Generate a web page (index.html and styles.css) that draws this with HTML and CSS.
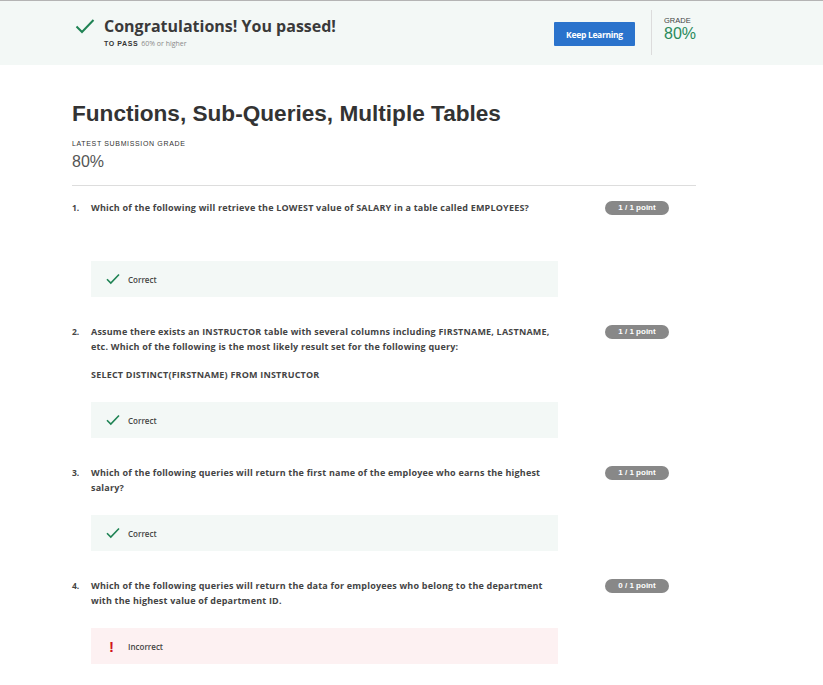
FILE: index.html
```html
<!DOCTYPE html>
<html lang="en">
<head>
<meta charset="utf-8">
<title>Functions, Sub-Queries, Multiple Tables</title>
<link rel="stylesheet" href="styles.css">
</head>
<body>
<header class="banner">
  <div class="banner-inner">
    <svg class="banner-check" width="20" height="16" viewBox="0 0 20 16"><path d="M1.5 8.5 L7 14 L18.5 2" fill="none" stroke="#1f8354" stroke-width="2"/></svg>
    <div class="banner-text">
      <h2 class="banner-title">Congratulations! You passed!</h2>
      <div class="banner-sub"><span class="to-pass">TO PASS</span> <span class="pass-req">60% or higher</span></div>
    </div>
    <button class="keep-btn">Keep Learning</button>
    <div class="banner-divider"></div>
    <div class="banner-grade">
      <div class="grade-label">GRADE</div>
      <div class="grade-value">80%</div>
    </div>
  </div>
</header>

<main class="content">
  <h1 class="page-title">Functions, Sub-Queries, Multiple Tables</h1>
  <div class="sub-label">LATEST SUBMISSION GRADE</div>
  <div class="sub-grade">80%</div>
  <hr class="rule">

  <section class="question">
    <div class="q-row">
      <span class="q-num">1.</span>
      <div class="q-text">
        <p>Which of the following will retrieve the LOWEST value of SALARY in a table called EMPLOYEES?</p>
        <div class="q-blank"></div>
      </div>
      <span class="badge">1 / 1 point</span>
    </div>
    <div class="result correct">
      <svg class="res-icon" width="14" height="12" viewBox="0 0 14 12"><path d="M1 6.2 L4.8 10 L13 1.5" fill="none" stroke="#1f8354" stroke-width="1.6"/></svg>
      <span>Correct</span>
    </div>
  </section>

  <section class="question">
    <div class="q-row">
      <span class="q-num">2.</span>
      <div class="q-text">
        <p>Assume there exists an INSTRUCTOR table with several columns including FIRSTNAME, LASTNAME, etc. Which of the following is the most likely result set for the following query:</p>
        <p class="q-code">SELECT DISTINCT(FIRSTNAME) FROM INSTRUCTOR</p>
      </div>
      <span class="badge">1 / 1 point</span>
    </div>
    <div class="result correct">
      <svg class="res-icon" width="14" height="12" viewBox="0 0 14 12"><path d="M1 6.2 L4.8 10 L13 1.5" fill="none" stroke="#1f8354" stroke-width="1.6"/></svg>
      <span>Correct</span>
    </div>
  </section>

  <section class="question">
    <div class="q-row">
      <span class="q-num">3.</span>
      <div class="q-text">
        <p>Which of the following queries will return the first name of the employee who earns the highest salary?</p>
      </div>
      <span class="badge">1 / 1 point</span>
    </div>
    <div class="result correct">
      <svg class="res-icon" width="14" height="12" viewBox="0 0 14 12"><path d="M1 6.2 L4.8 10 L13 1.5" fill="none" stroke="#1f8354" stroke-width="1.6"/></svg>
      <span>Correct</span>
    </div>
  </section>

  <section class="question">
    <div class="q-row">
      <span class="q-num">4.</span>
      <div class="q-text">
        <p>Which of the following queries will return the data for employees who belong to the department with the highest value of department ID.</p>
      </div>
      <span class="badge">0 / 1 point</span>
    </div>
    <div class="result incorrect">
      <span class="res-bang">!</span>
      <span>Incorrect</span>
    </div>
  </section>
</main>
</body>
</html>
```

FILE: styles.css
```css
html, body {
  margin: 0;
  padding: 0;
  background: #ffffff;
}

body {
  font-family: "Open Sans", "Liberation Sans", sans-serif;
  color: #333333;
}

.banner {
  border-top: 1px solid #b4b4b4;
  background: #f3f8f6;
  height: 64px;
}

.banner-inner {
  display: flex;
  align-items: flex-start;
  padding-left: 75px;
  height: 64px;
  box-sizing: border-box;
}

.banner-check {
  margin-top: 17px;
  flex: none;
}

.banner-text {
  margin-left: 9px;
  padding-top: 15px;
  width: 434px;
  flex: none;
}

.banner-title {
  margin: 0;
  font-size: 16px;
  line-height: 20px;
  font-weight: 700;
  color: #3a3a3a;
}

.banner-sub {
  margin-top: 3px;
  font-size: 7px;
  line-height: 10px;
}

.to-pass {
  font-family: "Liberation Sans", Arial, sans-serif;
  font-weight: 700;
  color: #333333;
  letter-spacing: 0.6px;
}

.pass-req {
  color: #8a8a8a;
  margin-left: 1px;
}

.keep-btn {
  margin-top: 21px;
  margin-left: 16px;
  width: 81px;
  height: 24px;
  border: none;
  border-radius: 1px;
  background: #2a73cc;
  color: #ffffff;
  font-family: "Open Sans", sans-serif;
  font-weight: 700;
  font-size: 8.5px;
  letter-spacing: -0.3px;
  padding: 0;
  flex: none;
}

.banner-divider {
  margin-left: 16px;
  margin-top: 9px;
  width: 1px;
  height: 45px;
  background: #dcdcdc;
  flex: none;
}

.banner-grade {
  margin-left: 12px;
  padding-top: 15px;
}

.grade-label {
  font-family: "Liberation Sans", Arial, sans-serif;
  font-size: 7.5px;
  line-height: 9px;
  color: #444444;
}

.grade-value {
  font-family: "Liberation Sans", Arial, sans-serif;
  font-size: 16px;
  line-height: 18px;
  color: #2a8a5c;
}

.content {
  margin-left: 72px;
  width: 624px;
  padding-top: 36px;
}

.page-title {
  margin: 0;
  font-family: "Liberation Sans", Arial, sans-serif;
  font-size: 22.6px;
  line-height: 26px;
  font-weight: 700;
  color: #333333;
}

.sub-label {
  margin-top: 12px;
  font-family: "Liberation Sans", Arial, sans-serif;
  font-size: 7px;
  line-height: 9px;
  letter-spacing: 0.65px;
  color: #333333;
}

.sub-grade {
  margin-top: 5px;
  font-family: "Liberation Sans", Arial, sans-serif;
  font-size: 16px;
  line-height: 18px;
  color: #555555;
}

.rule {
  margin: 14px 0 0 0;
  border: none;
  border-top: 1px solid #dddddd;
  height: 0;
}

.question {
  padding-top: 14px;
}

.question + .question {
  padding-top: 27px;
}

.q-row {
  display: flex;
  align-items: flex-start;
}

.q-num {
  width: 19px;
  flex: none;
  font-size: 8.5px;
  line-height: 15px;
  font-weight: 700;
  color: #444444;
}

.q-text {
  width: 470px;
  flex: none;
  font-size: 9px;
  letter-spacing: 0.2px;
  line-height: 15px;
  font-weight: 700;
  color: #444444;
}

.q-text p {
  margin: 0;
}

.q-text .q-code {
  margin-top: 13px;
}

.q-blank {
  height: 26px;
}

.badge {
  margin-left: 44px;
  margin-top: 0.5px;
  width: 64px;
  height: 14px;
  border-radius: 7px;
  background: #888888;
  color: #ffffff;
  font-family: "Liberation Sans", Arial, sans-serif;
  font-weight: 700;
  font-size: 8px;
  line-height: 14px;
  text-align: center;
  flex: none;
}

.result {
  margin-top: 20px;
  margin-left: 19px;
  width: 467px;
  height: 36px;
  display: flex;
  align-items: center;
  box-sizing: border-box;
  padding-left: 15px;
  font-size: 8px;
  font-weight: 600;
  color: #444444;
}

.result.correct {
  background: #f3f8f6;
}

.result.incorrect {
  background: #fdf1f2;
}

.res-icon {
  width: 14px;
  margin-right: 8px;
  flex: none;
}

.res-bang {
  width: 14px;
  margin-right: 8px;
  padding-left: 3px;
  box-sizing: border-box;
  color: #d0161b;
  font-family: "Liberation Sans", Arial, sans-serif;
  font-size: 15px;
  font-weight: 700;
  line-height: 15px;
}
```
